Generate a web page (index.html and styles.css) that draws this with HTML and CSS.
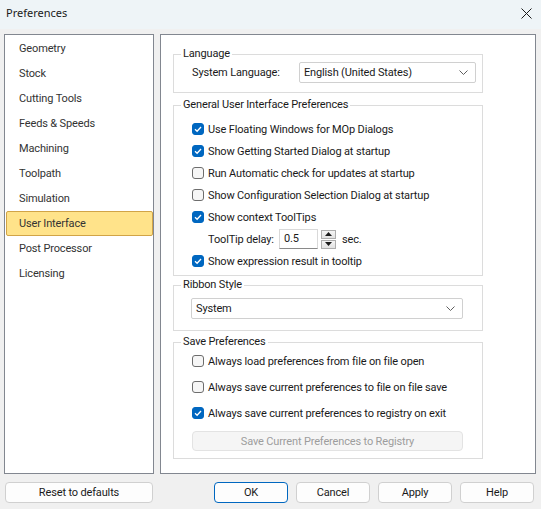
FILE: index.html
```html
<!DOCTYPE html>
<html lang="en">
<head>
    <meta charset="UTF-8">
    <title>Preferences</title>
    <link rel="stylesheet" href="styles.css">
</head>
<body>

<div class="dialog">
    <!-- Title bar -->
    <div class="titlebar">
        <span class="title">Preferences</span>
        <span class="close">
            <svg width="11" height="11" viewBox="0 0 11 11"><path d="M0.5 0.5 L10.5 10.5 M10.5 0.5 L0.5 10.5" stroke="#1a1a1a" stroke-width="1"/></svg>
        </span>
    </div>

    <div class="content">
        <!-- Category list -->
        <ul class="nav">
            <li>Geometry</li>
            <li>Stock</li>
            <li>Cutting Tools</li>
            <li>Feeds &amp; Speeds</li>
            <li>Machining</li>
            <li>Toolpath</li>
            <li>Simulation</li>
            <li class="active">User Interface</li>
            <li>Post Processor</li>
            <li>Licensing</li>
        </ul>

        <!-- Page -->
        <div class="page">
            <fieldset class="group group-lang">
                <legend>Language</legend>
                <div class="field-row">
                    <span>System Language:</span>
                    <div class="select select-lang">
                        <span>English (United States)</span>
                        <svg class="chevron" width="9" height="5" viewBox="0 0 9 5"><path d="M0.5 0.5 L4.5 4.5 L8.5 0.5" fill="none" stroke="#5f5f5f" stroke-width="1"/></svg>
                    </div>
                </div>
            </fieldset>

            <fieldset class="group group-general">
                <legend>General User Interface Preferences</legend>
                <div class="check-row"><span class="box checked"><svg width="12" height="12" viewBox="0 0 12 12"><path d="M3 6.3 L5.1 8.3 L9 4" fill="none" stroke="#fff" stroke-width="1.3"/></svg></span>Use Floating Windows for MOp Dialogs</div>
                <div class="check-row"><span class="box checked"><svg width="12" height="12" viewBox="0 0 12 12"><path d="M3 6.3 L5.1 8.3 L9 4" fill="none" stroke="#fff" stroke-width="1.3"/></svg></span>Show Getting Started Dialog at startup</div>
                <div class="check-row"><span class="box"></span>Run Automatic check for updates at startup</div>
                <div class="check-row"><span class="box"></span>Show Configuration Selection Dialog at startup</div>
                <div class="check-row"><span class="box checked"><svg width="12" height="12" viewBox="0 0 12 12"><path d="M3 6.3 L5.1 8.3 L9 4" fill="none" stroke="#fff" stroke-width="1.3"/></svg></span>Show context ToolTips</div>
                <div class="check-row delay-row">
                    <span class="delay-label">ToolTip delay:</span>
                    <div class="num-input">0.5</div>
                    <div class="spinner">
                        <span class="spin-btn"><svg width="7" height="4" viewBox="0 0 7 4"><path d="M0 4 L3.5 0 L7 4 Z" fill="#1a1a1a"/></svg></span>
                        <span class="spin-btn"><svg width="7" height="4" viewBox="0 0 7 4"><path d="M0 0 L3.5 4 L7 0 Z" fill="#1a1a1a"/></svg></span>
                    </div>
                    <span class="unit">sec.</span>
                </div>
                <div class="check-row"><span class="box checked"><svg width="12" height="12" viewBox="0 0 12 12"><path d="M3 6.3 L5.1 8.3 L9 4" fill="none" stroke="#fff" stroke-width="1.3"/></svg></span>Show expression result in tooltip</div>
            </fieldset>

            <fieldset class="group group-ribbon">
                <legend>Ribbon Style</legend>
                <div class="select select-ribbon">
                    <span>System</span>
                    <svg class="chevron" width="9" height="5" viewBox="0 0 9 5"><path d="M0.5 0.5 L4.5 4.5 L8.5 0.5" fill="none" stroke="#5f5f5f" stroke-width="1"/></svg>
                </div>
            </fieldset>

            <fieldset class="group group-save">
                <legend>Save Preferences</legend>
                <div class="save-list">
                    <div class="check-row"><span class="box"></span>Always load preferences from file on file open</div>
                    <div class="check-row"><span class="box"></span>Always save current preferences to file on file save</div>
                    <div class="check-row"><span class="box checked"><svg width="12" height="12" viewBox="0 0 12 12"><path d="M3 6.3 L5.1 8.3 L9 4" fill="none" stroke="#fff" stroke-width="1.3"/></svg></span>Always save current preferences to registry on exit</div>
                </div>
                <button class="btn btn-disabled" disabled>Save Current Preferences to Registry</button>
            </fieldset>
        </div>
    </div>

    <!-- Footer buttons -->
    <div class="footer">
        <button class="btn btn-reset">Reset to defaults</button>
        <div class="footer-right">
            <button class="btn btn-ok">OK</button>
            <button class="btn">Cancel</button>
            <button class="btn">Apply</button>
            <button class="btn">Help</button>
        </div>
    </div>
</div>

</body>
</html>
```

FILE: styles.css
```css
* {
    margin: 0;
    padding: 0;
    box-sizing: border-box;
}

body {
    font-family: Roboto, 'Liberation Sans', sans-serif;
    font-size: 11px;
    letter-spacing: -0.15px;
    color: #1a1a1a;
    background-color: #f0f0f0;
    width: 541px;
    height: 509px;
    overflow: hidden;
}

.dialog {
    width: 541px;
    height: 509px;
    background-color: #f0f0f0;
}

/* Title bar */
.titlebar {
    height: 29px;
    background-color: #eef4f7;
    display: flex;
    align-items: center;
    justify-content: space-between;
    padding: 0 9px 4px 6px;
}

.title {
    font-family: 'Noto Sans', sans-serif;
    font-size: 11px;
    letter-spacing: 0;
    color: #1a1a1a;
}

.close {
    display: flex;
    margin-top: 2px;
}

/* Main area */
.content {
    display: flex;
    gap: 6px;
    padding: 5px 0 0 4px;
    height: 445px;
}

.nav {
    list-style: none;
    width: 150px;
    height: 440px;
    background-color: #fff;
    border: 1px solid #828790;
    padding: 1px 0 0 1px;
}

.nav li {
    height: 25px;
    line-height: 24px;
    padding-left: 12px;
    color: #333;
    border: 1px solid transparent;
}

.nav li.active {
    background-color: #ffe38a;
    border-color: #d1a447;
    border-radius: 2px;
}

.page {
    width: 376px;
    height: 440px;
    background-color: #fff;
    border: 1px solid #828790;
    padding: 12px 0 0 12px;
}

/* Group boxes */
.group {
    width: 310px;
    border: 1px solid #dcdcdc;
    padding: 0 6px 0 18px;
}

.group legend {
    margin-left: -11px;
    padding: 0 2px;
    line-height: 14px;
}

.group-lang {
    padding-top: 1px;
    padding-bottom: 9px;
}

.group-general {
    margin-top: 5px;
    padding-top: 6px;
    padding-bottom: 3px;
}

.group-ribbon {
    margin-top: 2px;
    padding: 6px 0 11px 17px;
}

.group-ribbon legend {
    margin-left: -10px;
}

.group-save {
    margin-top: 4px;
    padding-bottom: 7px;
}

.field-row {
    display: flex;
    align-items: center;
    justify-content: space-between;
}

/* Combo boxes */
.select {
    height: 21px;
    background-color: #fff;
    border: 1px solid #d0d0d0;
    border-radius: 2px;
    display: flex;
    align-items: center;
    justify-content: space-between;
    padding: 0 7px 0 4px;
}

.select-lang {
    width: 177px;
}

.select-ribbon {
    width: 272px;
}

/* Checkboxes */
.check-row {
    height: 22px;
    display: flex;
    align-items: center;
    white-space: nowrap;
}

.box {
    flex-shrink: 0;
    width: 12px;
    height: 12px;
    margin-right: 4px;
    border: 1px solid #6d6d6d;
    border-radius: 3px;
    background-color: #f6f6f6;
    display: flex;
}

.box.checked {
    background-color: #0067c0;
    border-color: #0067c0;
}

.box svg {
    margin: -1px;
}

.save-list {
    margin-top: -1px;
}

.save-list .check-row {
    height: 26px;
}

/* Tooltip delay */
.delay-label {
    flex-shrink: 0;
    margin-left: 16px;
    width: 71px;
}

.num-input {
    flex-shrink: 0;
    width: 39px;
    height: 20px;
    border: 1px solid #d9d9d9;
    border-bottom-color: #8a8a8a;
    padding-left: 4px;
    line-height: 18px;
}

.spinner {
    margin-left: 3px;
    display: flex;
    flex-direction: column;
    gap: 1px;
}

.spin-btn {
    width: 15px;
    height: 9px;
    border: 1px solid #adadad;
    background: linear-gradient(#f4f4f4, #e2e2e2);
    display: flex;
    align-items: center;
    justify-content: center;
}

.unit {
    margin-left: 6px;
}

/* Buttons */
.btn {
    font: inherit;
    letter-spacing: inherit;
    color: #1a1a1a;
    height: 21px;
    width: 74px;
    background-color: #fdfdfd;
    border: 1px solid #d0d0d0;
    border-radius: 4px;
}

.btn-ok {
    border-color: #0067c0;
}

.btn-disabled {
    display: block;
    width: 271px;
    height: 20px;
    margin-top: 5px;
    color: #9d9d9d;
    background-color: #f5f5f5;
    border-color: #e3e3e3;
}

.footer {
    display: flex;
    justify-content: space-between;
    padding: 8px 7px 0 5px;
}

.btn-reset {
    width: 148px;
}

.footer-right {
    display: flex;
    gap: 8px;
}
```
